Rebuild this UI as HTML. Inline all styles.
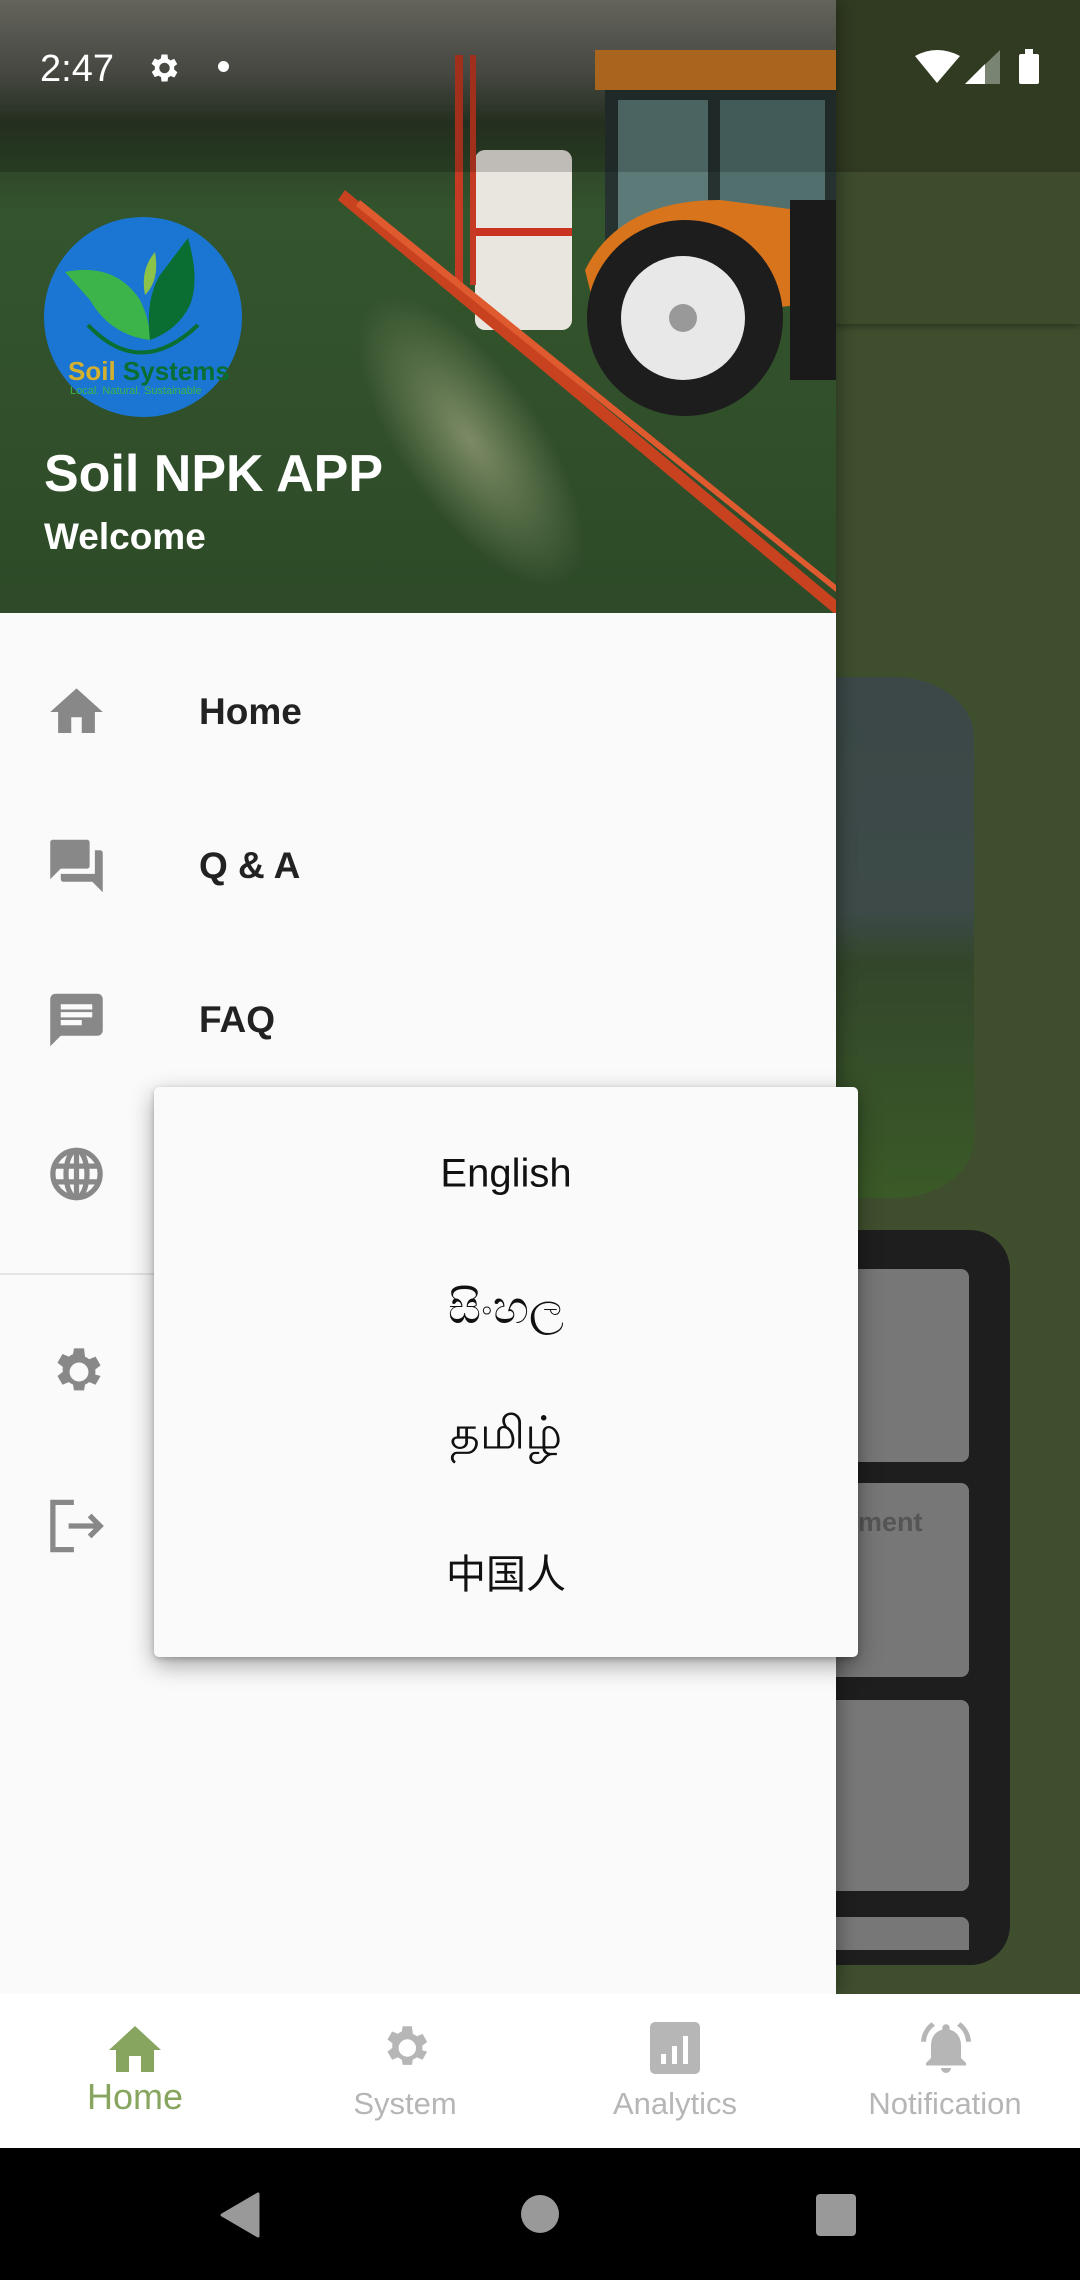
<!DOCTYPE html>
<html><head><meta charset="utf-8"><style>
*{margin:0;padding:0;box-sizing:border-box}
body{width:1080px;height:2280px;overflow:hidden;position:relative;background:#3f4f2e;font-family:"Liberation Sans","Noto Sans CJK SC",sans-serif}
.abs{position:absolute}
.item{position:absolute;left:0;width:836px;height:80px}
.item .lbl{position:absolute;left:199px;top:50%;transform:translateY(-50%);font-size:37px;font-weight:bold;color:#222}
.item svg{position:absolute;left:45px;top:50%;transform:translateY(-50%)}
.pop{position:absolute;left:154px;top:1087px;width:704px;height:570px;background:#fafafa;border-radius:5px;box-shadow:0 8px 24px rgba(0,0,0,.35),0 2px 6px rgba(0,0,0,.2)}
.pop div{position:absolute;left:0;width:100%;text-align:center;font-size:40px;color:#111;transform:translateY(-50%)}
.nav{position:absolute;top:1994px;width:270px;height:154px;text-align:center}
.nav .t{position:absolute;left:0;width:100%;top:92px;font-size:31px;color:#b6b6b6}
</style></head><body>
<div class="abs" style="left:0;top:0;width:1080px;height:172px;background:#313b22"></div>
<div class="abs" style="left:0;top:172px;width:1080px;height:152px;background:#3e4c2d;box-shadow:0 3px 6px rgba(0,0,0,.3)"></div>
<div class="abs" style="left:700px;top:677px;width:274px;height:521px;border-radius:0 80px 80px 0/0 60px 60px 0;background:linear-gradient(#3b4847 0%,#3d4a48 45%,#33462a 55%,#3a5a27 100%)"></div>
<div class="abs" style="left:700px;top:1230px;width:310px;height:735px;border-radius:0 40px 40px 0;background:#1e1e1e"></div>
<div class="abs" style="left:700px;top:1269px;width:269px;height:193px;border-radius:8px;background:#777"></div>
<div class="abs" style="left:700px;top:1483px;width:269px;height:194px;border-radius:8px;background:#777"><span style="position:absolute;left:158px;top:24px;font-size:27px;font-weight:bold;color:#555">ment</span></div>
<div class="abs" style="left:700px;top:1700px;width:269px;height:191px;border-radius:8px;background:#777"></div>
<div class="abs" style="left:700px;top:1917px;width:269px;height:33px;border-radius:8px 8px 0 0;background:#777"></div>

<div class="abs" style="left:0;top:0;width:836px;height:1994px;background:#fafafa;box-shadow:4px 0 16px rgba(0,0,0,.3)"></div>
<svg class="abs" style="left:0;top:0" width="836" height="613" viewBox="0 0 836 613">
<defs>
<linearGradient id="sky" x1="0" y1="0" x2="0" y2="1"><stop offset="0" stop-color="#7a7a70"/><stop offset=".12" stop-color="#55574f"/><stop offset=".2" stop-color="#2c3a26"/><stop offset=".35" stop-color="#33552d"/><stop offset="1" stop-color="#2e4a28"/></linearGradient>
<radialGradient id="spray" cx=".5" cy=".5" r=".5"><stop offset="0" stop-color="#c9c7a0" stop-opacity=".5"/><stop offset="1" stop-color="#c9c7a0" stop-opacity="0"/></radialGradient>
</defs>
<rect width="836" height="613" fill="url(#sky)"/>
<ellipse cx="470" cy="440" rx="70" ry="170" fill="url(#spray)" transform="rotate(-35 470 440)"/>
<!-- tractor -->
<rect x="595" y="50" width="241" height="40" fill="#cf7a25"/>
<rect x="605" y="90" width="231" height="170" fill="#263230"/>
<rect x="618" y="100" width="90" height="150" fill="#5c7b78"/>
<rect x="720" y="100" width="105" height="150" fill="#51706d"/>
<path d="M585 270 Q620 200 720 200 L836 215 L836 300 L600 330 Z" fill="#d8741c"/>
<circle cx="685" cy="318" r="98" fill="#1d1d1d"/>
<circle cx="683" cy="318" r="62" fill="#e8e8e8"/>
<circle cx="683" cy="318" r="14" fill="#999"/>
<rect x="790" y="200" width="46" height="180" fill="#1a1a1a"/>
<!-- tank -->
<rect x="475" y="150" width="97" height="180" rx="10" fill="#e9e6e0"/>
<rect x="475" y="228" width="97" height="8" fill="#c8341f"/>
<rect x="455" y="55" width="8" height="230" fill="#c43a22"/>
<rect x="470" y="55" width="6" height="230" fill="#c43a22"/>
<path d="M345 190 L836 600 L836 615 L338 200 Z" fill="#c8421f"/>
<path d="M360 200 L836 585 L836 592 L356 206 Z" fill="#e05a30"/>
<!-- logo -->
<ellipse cx="143" cy="317" rx="99" ry="100" fill="#1a76d2"/>
<path d="M65 272 Q115 262 140 300 Q150 320 150 340 Q110 335 90 300 Z" fill="#3cb44a"/>
<path d="M188 238 Q200 280 190 305 Q178 330 150 340 Q145 300 160 275 Z" fill="#0a6e33"/>
<path d="M155 252 Q140 270 145 295 Q160 280 155 252 Z" fill="#8bc34a"/>
<path d="M88 325 Q140 380 198 325" stroke="#0a6e33" stroke-width="4" fill="none"/>
<text x="68" y="380" font-family="Liberation Sans,sans-serif" font-weight="bold" font-size="26" fill="#d4b030">Soil <tspan fill="#0a6e33">Systems</tspan></text>
<text x="70" y="394" font-family="Liberation Sans,sans-serif" font-size="11" fill="#3cb44a">Local. Natural. Sustainable</text>
<rect width="836" height="172" fill="#000" opacity=".18"/>
</svg>
<div class="abs" style="left:44px;top:444px;font-size:52px;font-weight:bold;color:#fff">Soil NPK APP</div>
<div class="abs" style="left:44px;top:516px;font-size:37px;font-weight:bold;color:#fff">Welcome</div>

<div class="abs" style="left:40px;top:48px;font-size:38px;color:#fff">2:47</div>
<svg class="abs" style="left:145px;top:50px" width="36" height="36" viewBox="0 0 24 24"><path fill="#fff" d="M19.4 13a7.5 7.5 0 000-2l2.1-1.6-2-3.5-2.5 1a7 7 0 00-1.7-1L15 3h-4l-.4 2.7a7 7 0 00-1.7 1l-2.5-1-2 3.5L6.6 11a7.5 7.5 0 000 2l-2.1 1.6 2 3.5 2.5-1a7 7 0 001.7 1L11 21h4l.4-2.7a7 7 0 001.7-1l2.5 1 2-3.5zM13 15.5a3.5 3.5 0 110-7 3.5 3.5 0 010 7z"/></svg>
<div class="abs" style="left:218px;top:61px;width:11px;height:11px;border-radius:50%;background:#fff"></div>
<svg class="abs" style="left:915px;top:50px" width="45" height="34" viewBox="0 0 45 34"><path d="M0 6 Q22 -6 45 6 L22 33 Z" fill="#fff"/></svg>
<svg class="abs" style="left:965px;top:50px" width="35" height="34"><path d="M0 34 L35 0 V34 Z" fill="#7a8472"/><path d="M0 34 L20 14 V34 Z" fill="#fff"/></svg>
<div class="abs" style="left:1019px;top:54px;width:20px;height:30px;background:#fff;border-radius:2px"></div>
<div class="abs" style="left:1025px;top:49px;width:8px;height:6px;background:#fff"></div>

<div class="item" style="top:672px"><svg width="63" height="63" viewBox="0 0 24 24"><path fill="#888" d="M10 20v-6h4v6h5v-8h3L12 3 2 12h3v8z"/></svg><span class="lbl">Home</span></div>
<div class="item" style="top:826px"><svg width="63" height="63" viewBox="0 0 24 24"><path fill="#888" d="M21 6h-2v9H6v2c0 .55.45 1 1 1h11l4 4V7c0-.55-.45-1-1-1zm-4 6V3c0-.55-.45-1-1-1H3c-.55 0-1 .45-1 1v14l4-4h10c.55 0 1-.45 1-1z"/></svg><span class="lbl">Q &amp; A</span></div>
<div class="item" style="top:980px"><svg width="63" height="63" viewBox="0 0 24 24"><path fill="#888" d="M20 2H4c-1.1 0-2 .9-2 2v18l4-4h14c1.1 0 2-.9 2-2V4c0-1.1-.9-2-2-2zM6 9h12v2H6V9zm8 5H6v-2h8v2zm4-6H6V6h12v2z"/></svg><span class="lbl">FAQ</span></div>
<div class="item" style="top:1134px"><svg width="63" height="63" viewBox="0 0 24 24"><circle cx="12" cy="12" r="9" fill="none" stroke="#888" stroke-width="2"/><ellipse cx="12" cy="12" rx="4" ry="9" fill="none" stroke="#888" stroke-width="2"/><path d="M3 9h18M3 15h18M12 3v18" stroke="#888" stroke-width="2"/></svg></div>
<div class="abs" style="left:0;top:1273px;width:836px;height:2px;background:#e4e4e4"></div>
<div class="item" style="top:1332px"><svg width="63" height="63" viewBox="0 0 24 24"><path fill="#888" d="M19.14 12.94a7.1 7.1 0 000-1.88l2.03-1.58-1.92-3.32-2.39.96a7 7 0 00-1.62-.94L14.880 3h-3.84l-.36 2.18a7 7 0 00-1.62.94l-2.39-.96-1.92 3.32 2.03 1.58a7.1 7.1 0 000 1.88l-2.03 1.58 1.92 3.32 2.39-.96c.5.38 1.04.7 1.62.94l.36 2.18h3.84l.36-2.18a7 7 0 001.62-.94l2.39.96 1.92-3.32zM12.96 15.6a3.6 3.6 0 110-7.2 3.6 3.6 0 010 7.2z"/></svg></div>
<div class="item" style="top:1486px"><svg width="63" height="63" viewBox="0 0 24 24"><path d="M11 3H3v18h8M9 12h12M17 8l4 4-4 4" fill="none" stroke="#888" stroke-width="2"/></svg></div>

<div class="pop">
<div style="top:87px">English</div>
<div style="top:221px;font-size:46px;font-family:'DejaVu Sans','Liberation Sans',sans-serif">සිංහල</div>
<div style="top:349px;font-size:46px;font-family:'DejaVu Sans','Liberation Sans',sans-serif">தமிழ்</div>
<div style="top:484px;font-family:'Noto Sans CJK SC',sans-serif">中国人</div>
</div>

<div class="abs" style="left:0;top:1994px;width:1080px;height:154px;background:#fff"></div>
<div class="nav" style="left:0"><svg style="position:absolute;left:107px;top:30px" width="56" height="50" viewBox="0 0 56 50"><path d="M28 2 L54 26 H47 V48 H34 V32 H22 V48 H9 V26 H2 Z" fill="#87a55f"/></svg><div class="t" style="color:#87a55f;font-size:36px;top:82px">Home</div></div>
<div class="nav" style="left:270px"><svg style="position:absolute;left:106px;top:24px" width="58" height="60" viewBox="0 0 24 24"><path fill="#b6b6b6" d="M19.14 12.94a7.1 7.1 0 000-1.88l2.03-1.58-1.92-3.32-2.39.96a7 7 0 00-1.62-.94L14.88 3h-3.84l-.36 2.18a7 7 0 00-1.62.94l-2.39-.96-1.92 3.32 2.03 1.58a7.1 7.1 0 000 1.88l-2.03 1.58 1.92 3.32 2.39-.96c.5.38 1.04.7 1.62.94l.36 2.18h3.84l.36-2.18a7 7 0 001.62-.94l2.39.96 1.92-3.32zM12.96 15.6a3.6 3.6 0 110-7.2 3.6 3.6 0 010 7.2z"/></svg><div class="t">System</div></div>
<div class="nav" style="left:540px"><svg style="position:absolute;left:110px;top:28px" width="50" height="52" viewBox="0 0 50 52"><rect width="50" height="52" rx="5" fill="#b6b6b6"/><rect x="11" y="32" width="5" height="10" fill="#fff"/><rect x="22" y="24" width="5" height="18" fill="#fff"/><rect x="33" y="14" width="5" height="28" fill="#fff"/></svg><div class="t">Analytics</div></div>
<div class="nav" style="left:810px"><svg style="position:absolute;left:106px;top:24px" width="60" height="60" viewBox="0 0 24 24"><path fill="#b6b6b6" d="M12 22a2 2 0 002-2h-4a2 2 0 002 2zm6-6v-5c0-3.1-1.6-5.6-4.5-6.3V4a1.5 1.5 0 00-3 0v.7C7.6 5.4 6 7.9 6 11v5l-2 2v1h16v-1l-2-2zM7.6 3.1 6.2 1.7A10.4 10.4 0 002 9.5h2a8.4 8.4 0 013.6-6.4zM20 9.5h2a10.4 10.4 0 00-4.2-7.8l-1.4 1.4A8.4 8.4 0 0120 9.5z"/></svg><div class="t">Notification</div></div>

<div class="abs" style="left:0;top:2148px;width:1080px;height:132px;background:#000"></div>
<svg class="abs" style="left:218px;top:2192px" width="42" height="46"><path d="M40 2 L40 44 L4 23 Z" fill="#999" stroke="#999" stroke-width="3" stroke-linejoin="round"/></svg>
<div class="abs" style="left:521px;top:2195px;width:38px;height:38px;border-radius:50%;background:#999"></div>
<div class="abs" style="left:816px;top:2194px;width:40px;height:42px;border-radius:4px;background:#999"></div>
</body></html>
